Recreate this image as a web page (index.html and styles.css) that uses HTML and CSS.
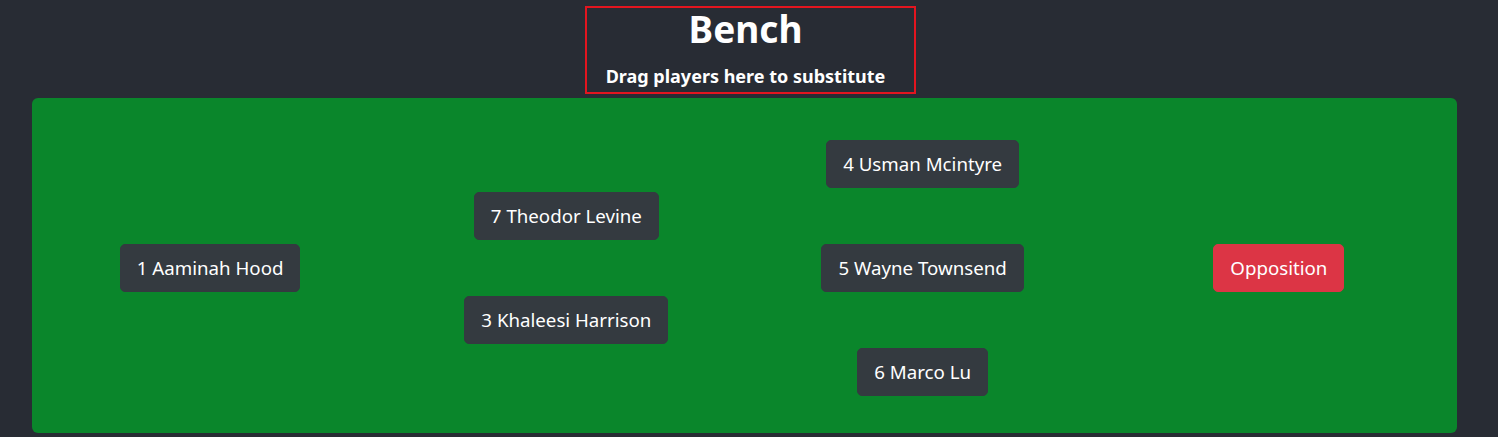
FILE: index.html
```html
<!DOCTYPE html>
<html lang="en">
<head>
<meta charset="utf-8">
<title>Bench</title>
<link rel="stylesheet" href="styles.css">
</head>
<body>
<div class="app">
  <header class="bench-wrap">
    <div class="bench">
      <h1 class="bench-title">Bench</h1>
      <p class="bench-sub">Drag players here to substitute</p>
    </div>
  </header>
  <main class="field">
    <div class="col">
      <button class="btn btn-dark">1 Aaminah Hood</button>
    </div>
    <div class="col">
      <button class="btn btn-dark">7 Theodor Levine</button>
      <button class="btn btn-dark">3 Khaleesi Harrison</button>
    </div>
    <div class="col">
      <button class="btn btn-dark">4 Usman Mcintyre</button>
      <button class="btn btn-dark">5 Wayne Townsend</button>
      <button class="btn btn-dark">6 Marco Lu</button>
    </div>
    <div class="col">
      <button class="btn btn-danger">Opposition</button>
    </div>
  </main>
</div>
</body>
</html>
```
FILE: styles.css
```css
* { box-sizing: border-box; }
html, body {
  margin: 0;
  padding: 0;
  background: #282c34;
  font-family: "Noto Sans", "Open Sans", sans-serif;
  color: #fff;
}
.app {
  padding: 6px 41px 4px 32px;
}
.bench-wrap {
  display: flex;
  justify-content: center;
  padding-left: 12px;
}
.bench {
  border: 2px solid #e3151f;
  padding: 0 28.5px 0 18.5px;
  text-align: center;
  height: 88px;
}
.bench-title {
  margin: -3px 0 0;
  font-size: 37px;
  font-weight: 700;
  line-height: 48px;
}
.bench-sub {
  margin: 11px 0 0;
  font-size: 18px;
  font-weight: 700;
  line-height: 24px;
}
.field {
  margin-top: 4px;
  background: #0a862b;
  border-radius: 6px;
  height: 335px;
  padding: 42px 0 37px;
  display: grid;
  grid-template-columns: repeat(4, 1fr);
  align-items: center;
}
.col {
  display: flex;
  flex-direction: column;
  align-items: center;
  justify-content: center;
  gap: 56px;
}
.btn {
  font-family: inherit;
  font-size: 18.7px;
  line-height: 30px;
  padding: 8px 16px;
  border: 1px solid transparent;
  border-radius: 5px;
  color: #fff;
  cursor: pointer;
}
.btn-dark {
  background: #343a40;
  border-color: #343a40;
}
.btn-danger {
  background: #dc3545;
  border-color: #dc3545;
}
```
